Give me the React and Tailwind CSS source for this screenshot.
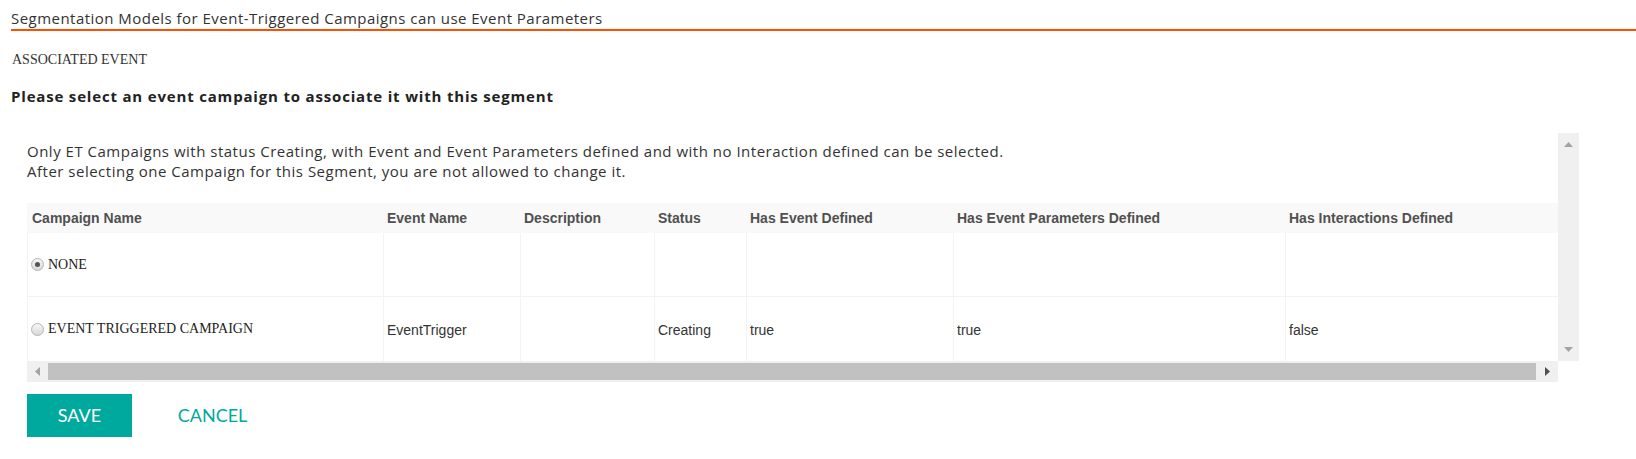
const columns = [
  { label: 'Campaign Name', width: 'w-[356px]', head: 'pl-[5px]' },
  { label: 'Event Name', width: 'w-[137px]', head: 'pl-[4px]' },
  { label: 'Description', width: 'w-[134px]', head: 'pl-[4px]' },
  { label: 'Status', width: 'w-[92px]', head: 'pl-[4px]' },
  { label: 'Has Event Defined', width: 'w-[207px]', head: 'pl-[4px]' },
  { label: 'Has Event Parameters Defined', width: 'w-[332px]', head: 'pl-[4px]' },
  { label: 'Has Interactions Defined', width: 'w-[273px]', head: 'pl-[4px]' },
]

const rows = [
  { name: 'NONE', checked: true, cells: ['', '', '', '', '', ''] },
  {
    name: 'EVENT TRIGGERED CAMPAIGN',
    checked: false,
    cells: ['EventTrigger', '', 'Creating', 'true', 'true', 'false'],
  },
]

const sans = 'font-["Open_Sans","Noto_Sans",sans-serif]'

function Radio({ checked }) {
  return (
    <span className="mr-[4px] flex h-[13px] w-[13px] shrink-0 items-center justify-center rounded-full border border-[#b4b4b4] bg-linear-to-b from-[#f6f6f6] to-[#d9d9d9]">
      {checked && <span className="h-[5px] w-[5px] rounded-full bg-[#555]" />}
    </span>
  )
}

function Tri({ dir, color }) {
  const pts = {
    up: '0,5 4.5,0 9,5',
    down: '0,0 9,0 4.5,5',
    left: '5,0 5,9 0,4.5',
    right: '0,0 0,9 5,4.5',
  }[dir]
  const vertical = dir === 'up' || dir === 'down'
  return (
    <svg width={vertical ? 9 : 5} height={vertical ? 5 : 9} className="block">
      <polygon points={pts} fill={color} />
    </svg>
  )
}

export default function App() {
  return (
    <div className="min-h-[459px] w-[1636px] bg-white text-[#333]">
      <div
        className={`ml-[11px] border-b-2 border-[#ff4e00] pt-[8px] pb-[1px] text-[15px] leading-[20px] tracking-[0.47px] text-[#333] ${sans}`}
      >
        Segmentation Models for Event-Triggered Campaigns can use Event Parameters
      </div>

      <div className='mt-[21px] ml-[12px] font-["Liberation_Serif",serif] text-[14px] leading-[16px] text-[#333]'>
        ASSOCIATED EVENT
      </div>

      <h2
        className={`mt-[18px] ml-[11px] text-[15px] leading-[20px] font-bold tracking-[0.82px] text-[#222] ${sans}`}
      >
        Please select an event campaign to associate it with this segment
      </h2>

      <div className="mt-[27px] pl-[27px]">
        <div className="flex">
          <div className="w-[1531px]">
            <p
              className={`pt-[8px] text-[15px] leading-[20px] tracking-[0.5px] text-[#333] ${sans}`}
            >
              Only ET Campaigns with status Creating, with Event and Event Parameters
              defined and with no Interaction defined can be selected.
              <br />
              After selecting one Campaign for this Segment, you are not allowed to
              change it.
            </p>

            <div className='mt-[22px] font-["Liberation_Sans",Arial,sans-serif] text-[14px] leading-[16px]'>
              <div className="flex h-[30px] items-center bg-[#f9f9f9] font-bold text-[#505050]">
                {columns.map((c) => (
                  <div key={c.label} className={`${c.width} ${c.head} shrink-0`}>
                    {c.label}
                  </div>
                ))}
              </div>

              {rows.map((r) => (
                <div
                  key={r.name}
                  className="flex h-[64px] border-b border-[#f3f3f3] last:border-b-0"
                >
                  <div
                    className={`${columns[0].width} flex shrink-0 items-center border-l border-[#f3f3f3] pl-[3px] font-["Liberation_Serif",serif] text-[#222]`}
                  >
                    <Radio checked={r.checked} />
                    {r.name}
                  </div>
                  {r.cells.map((v, i) => (
                    <div
                      key={i}
                      className={`${columns[i + 1].width} flex shrink-0 items-center border-l border-[#f3f3f3] pt-[1px] pl-[3px] text-[#333]`}
                    >
                      {v}
                    </div>
                  ))}
                </div>
              ))}
            </div>
          </div>

          <div className="flex w-[21px] flex-col items-center justify-between bg-[#f0f0f0] pt-[9px] pb-[9px]">
            <Tri dir="up" color="#a3a3a3" />
            <Tri dir="down" color="#a3a3a3" />
          </div>
        </div>

        <div className="flex h-[21px] w-[1531px] items-center bg-[#f0f0f0]">
          <div className="flex w-[21px] justify-center pr-[1px]">
            <Tri dir="left" color="#a3a3a3" />
          </div>
          <div className="h-[17px] flex-1 bg-[#c1c1c1]" />
          <div className="flex w-[22px] justify-center pl-[1px]">
            <Tri dir="right" color="#505050" />
          </div>
        </div>

        <div className='mt-[12px] flex gap-[28px] font-["Lato",sans-serif] text-[18px]'>
          <button
            type="button"
            className="flex h-[43px] w-[105px] items-center justify-center bg-[#00a99d] text-white"
          >
            SAVE
          </button>
          <button
            type="button"
            className="flex h-[43px] w-[105px] items-center justify-center text-[#00a99d]"
          >
            CANCEL
          </button>
        </div>
      </div>
    </div>
  )
}
